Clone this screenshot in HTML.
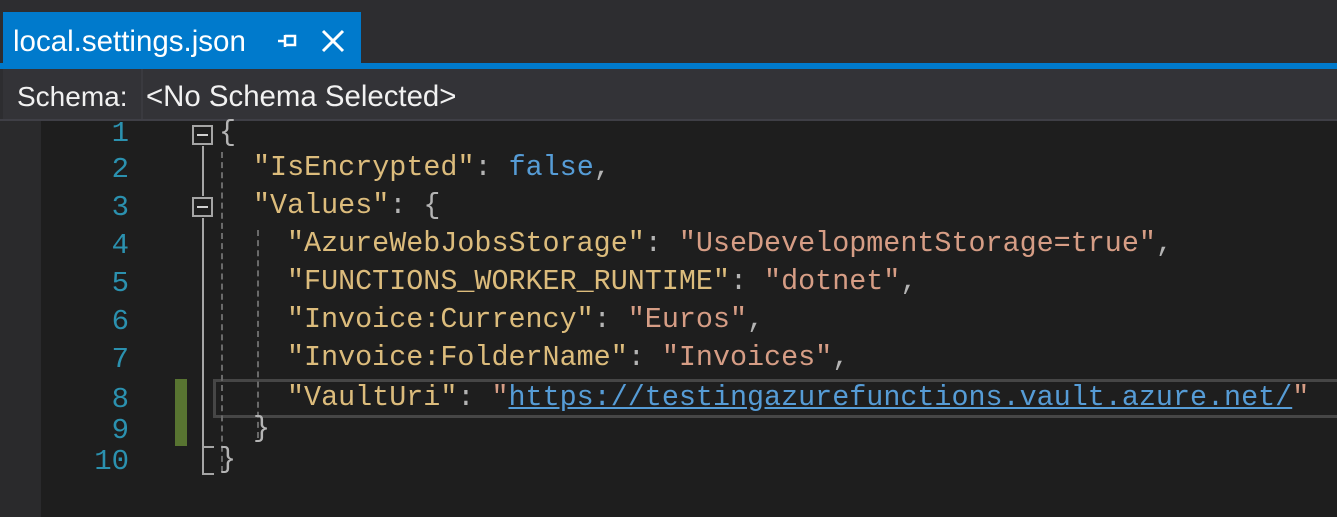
<!DOCTYPE html>
<html><head><style>
body{margin:0;width:1337px;height:517px;background:#1e1e1e;overflow:hidden;position:relative;font-family:"Liberation Sans",sans-serif}
.top{position:absolute;left:0;top:0;width:1337px;height:63px;background:#2d2d30}
.tab{position:absolute;left:3px;top:12px;width:358px;height:57px;background:#007acc}
.tabt{position:absolute;left:13px;top:25px;color:#fff;font-size:29.5px}
.bl{position:absolute;left:0;top:63px;width:1337px;height:6px;background:#007acc}
.sb{position:absolute;left:0;top:69px;width:1337px;height:50px;background:#2d2d30;border-bottom:2px solid #3f3f46}
.sbl{position:absolute;left:3px;top:69px;width:138px;height:50px;background:#333337}
.combo{position:absolute;left:141px;top:69px;width:1196px;height:50px;background:#333337;border-left:2px solid #3a3a3f}
.st{position:absolute;top:81px;color:#f1f1f1;font-size:28px}
.lm{position:absolute;left:0;top:121px;width:41px;height:396px;background:#2a2a2c}
.code{position:absolute;font-family:"Liberation Mono",monospace;font-size:28.4px;white-space:pre;line-height:34px}
.ln{position:absolute;width:129px;text-align:right;left:0;color:#2b91af;font-family:"Liberation Mono",monospace;font-size:29px;line-height:34px}
.k{color:#dcbc7c}.s{color:#d69d85}.p{color:#b4b4b4}.b{color:#569cd6}
.u{color:#569cd6;text-decoration:underline}
.fold{position:absolute;left:192px;width:17px;height:16px;border:2px solid #a5a5a5}
.fold:after{content:"";position:absolute;left:3px;top:7px;width:11px;height:2px;background:#d0d0d0}
.vl{position:absolute;background:#a5a5a5;width:2px}
.dg{position:absolute;width:0;border-left:2px dashed #6a6a6a}
</style></head><body>
<div class="top"></div>
<div class="tab"></div>
<div class="tabt">local.settings.json</div>
<svg style="position:absolute;left:276px;top:30px" width="22" height="22" viewBox="0 0 22 22"><path d="M2 11h7M9 5v12M9 6h10v9H9" stroke="#fff" stroke-width="2.5" fill="none"/></svg>
<svg style="position:absolute;left:321px;top:29px" width="24" height="24" viewBox="0 0 24 24"><path d="M2 2L22 22M22 2L2 22" stroke="#fff" stroke-width="3"/></svg>
<div class="bl"></div>
<div class="sb"></div><div class="sbl"></div><div class="combo"></div>
<div class="st" style="left:17px">Schema:</div>
<div class="st" style="left:146px;font-size:29.4px;top:80px">&lt;No Schema Selected&gt;</div>
<div class="lm"></div>
<div style="position:absolute;left:175px;top:379px;width:12px;height:67px;background:#587431"></div>
<div style="position:absolute;left:213px;top:379px;width:1130px;height:33px;border:3px solid #464646"></div>
<div class="vl" style="left:202px;top:146px;height:50px"></div>
<div class="vl" style="left:202px;top:218px;height:257px"></div>
<div class="vl" style="left:202px;top:473px;width:12px;height:2px"></div>
<div class="vl" style="left:202px;top:446px;width:12px;height:2px"></div>
<div class="fold" style="top:125px"></div>
<div class="fold" style="top:197px"></div>
<div class="dg" style="left:221px;top:152px;height:320px"></div>
<div class="dg" style="left:257px;top:230px;height:208px"></div>
<div class="ln" style="top:117px">1</div>
<div class="ln" style="top:153px">2</div>
<div class="ln" style="top:191px">3</div>
<div class="ln" style="top:229px">4</div>
<div class="ln" style="top:267px">5</div>
<div class="ln" style="top:305px">6</div>
<div class="ln" style="top:343px">7</div>
<div class="ln" style="top:383px">8</div>
<div class="ln" style="top:414px">9</div>
<div class="ln" style="top:445px">10</div>
<div class="code" style="left:219px;top:116px"><span class="p">{</span></div>
<div class="code" style="left:253px;top:151px"><span class="k">"IsEncrypted"</span><span class="p">: </span><span class="b">false</span><span class="p">,</span></div>
<div class="code" style="left:253px;top:189px"><span class="k">"Values"</span><span class="p">: {</span></div>
<div class="code" style="left:287px;top:227px"><span class="k">"AzureWebJobsStorage"</span><span class="p">: </span><span class="s">"UseDevelopmentStorage=true"</span><span class="p">,</span></div>
<div class="code" style="left:287px;top:265px"><span class="k">"FUNCTIONS_WORKER_RUNTIME"</span><span class="p">: </span><span class="s">"dotnet"</span><span class="p">,</span></div>
<div class="code" style="left:287px;top:303px"><span class="k">"Invoice:Currency"</span><span class="p">: </span><span class="s">"Euros"</span><span class="p">,</span></div>
<div class="code" style="left:287px;top:341px"><span class="k">"Invoice:FolderName"</span><span class="p">: </span><span class="s">"Invoices"</span><span class="p">,</span></div>
<div class="code" style="left:287px;top:381px"><span class="k">"VaultUri"</span><span class="p">: </span><span class="s">"</span><span class="u">https://testingazurefunctions.vault.azure.net/</span><span class="s">"</span></div>
<div class="code" style="left:253px;top:412px"><span class="p">}</span></div>
<div class="code" style="left:219px;top:443px"><span class="p">}</span></div>
</body></html>
